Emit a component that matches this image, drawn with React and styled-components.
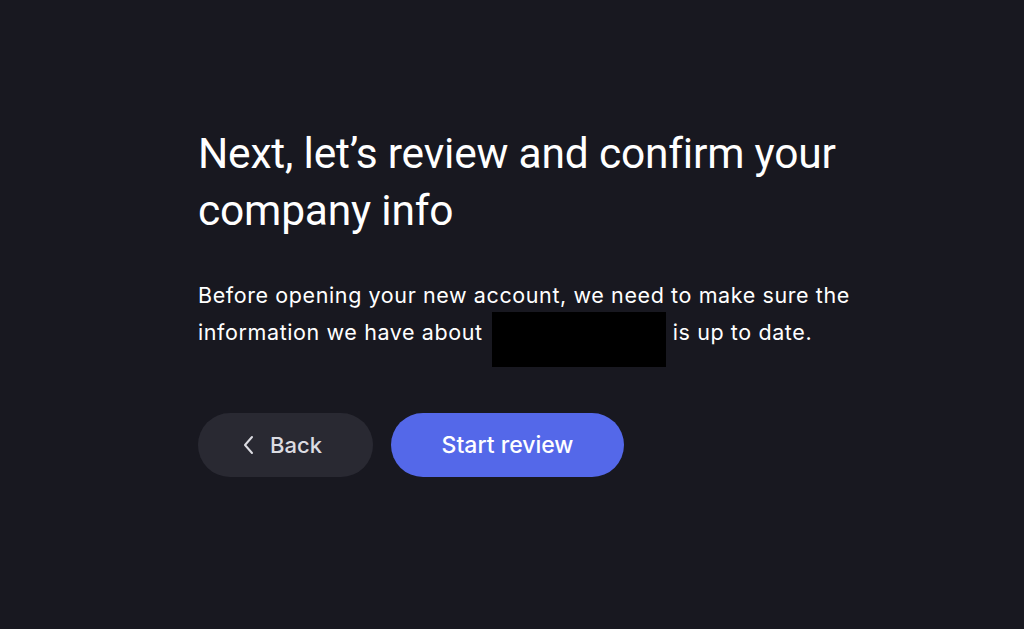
import React from "react";
import styled, { createGlobalStyle } from "styled-components";

const Global = createGlobalStyle`
  html, body { margin: 0; padding: 0; background: #181820; }
  body { font-family: Inter, "Liberation Sans", sans-serif; -webkit-font-smoothing: antialiased; }
`;

const Page = styled.main`
  min-height: 629px;
  box-sizing: border-box;
  padding: 125px 0 0 198px;
  background: #181820;
  color: #ffffff;
`;

const Content = styled.div`
  width: 720px;
  display: flex;
  flex-direction: column;
`;

const Title = styled.h1`
  margin: 0;
  font-family: Roboto, "Liberation Sans", sans-serif;
  font-size: 42.5px;
  line-height: 57px;
  font-weight: 400;
  letter-spacing: -0.2px;
  color: #ffffff;
`;

const Body = styled.p`
  margin: 38px 0 0;
  width: 690px;
  font-size: 21.5px;
  line-height: 37px;
  font-weight: 400;
  letter-spacing: 0.6px;
  color: #ffffff;
`;

const Redacted = styled.span`
  display: inline-block;
  vertical-align: top;
  width: 174px;
  height: 55px;
  margin: -2.5px 7px -15.5px 9px;
  background: #000;
`;

const Actions = styled.div`
  display: flex;
  gap: 18px;
  margin-top: 62px;
`;

const Button = styled.button`
  height: 64px;
  border: none;
  border-radius: 32px;
  display: flex;
  align-items: center;
  justify-content: center;
  gap: 16px;
  padding: 0 ${(p) => (p.$primary ? 0 : 6)}px 0 0;
  font-family: inherit;
  font-size: ${(p) => (p.$primary ? 23 : 22)}px;
  font-weight: 500;
  cursor: pointer;
  width: ${(p) => p.$w}px;
  background: ${(p) => (p.$primary ? "#5468e9" : "#292932")};
  color: ${(p) => (p.$primary ? "#ffffff" : "#dcdce2")};
`;

const Chevron = () => (
  <svg width="11" height="20" viewBox="0 0 11 20" fill="none">
    <path d="M9 2L2 10l7 8" stroke="#dcdce2" strokeWidth="2" strokeLinecap="round" strokeLinejoin="round" />
  </svg>
);

export default function App() {
  return (
    <>
      <Global />
      <Page>
        <Content>
          <Title>
            Next, let’s review and confirm your
            <br />
            company info
          </Title>
          <Body>
            Before opening your new account, we need to make sure the information we have about
            <Redacted aria-hidden="true" />
            is up to date.
          </Body>
          <Actions>
            <Button $w={175}>
              <Chevron />
              Back
            </Button>
            <Button $w={233} $primary>
              Start review
            </Button>
          </Actions>
        </Content>
      </Page>
    </>
  );
}
